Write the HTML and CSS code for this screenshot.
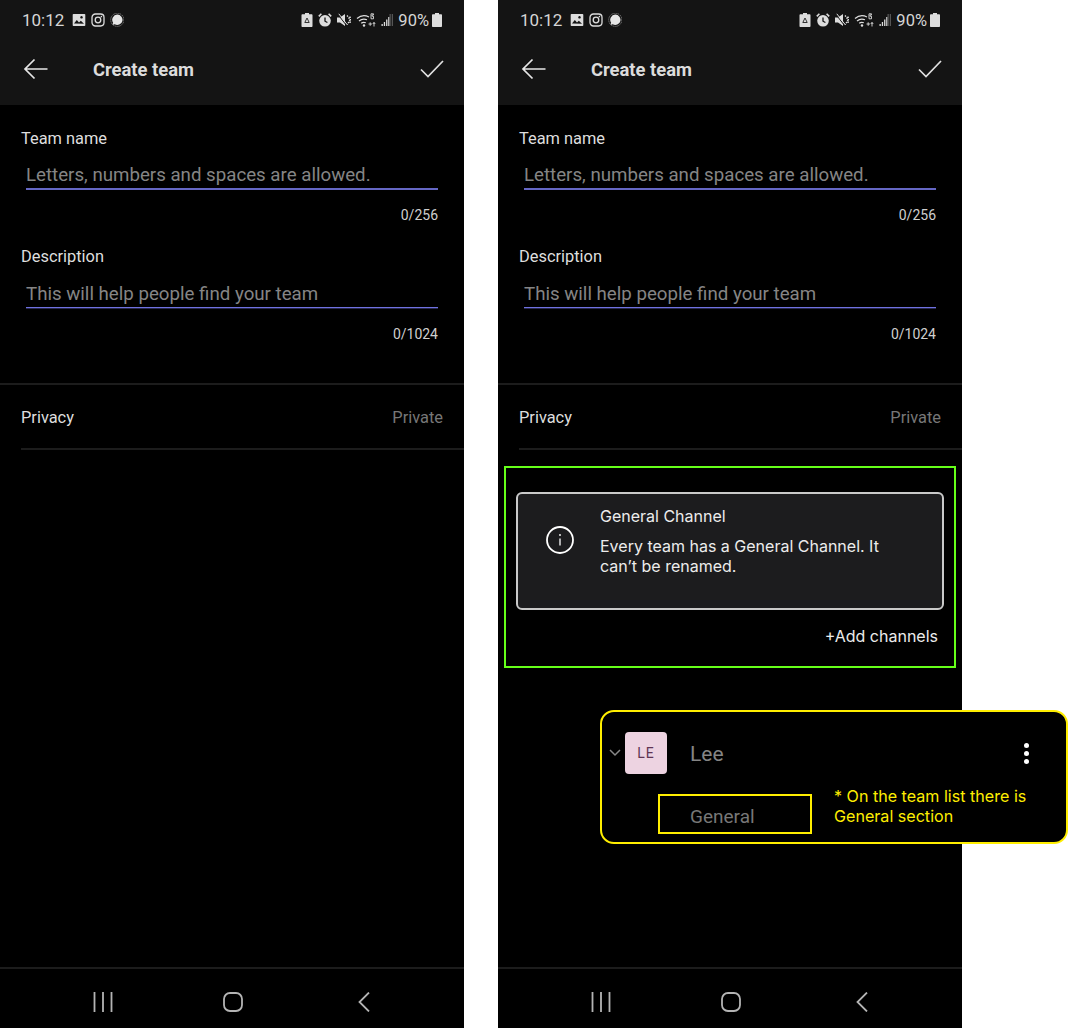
FILE: index.html
```html
<!DOCTYPE html>
<html>
<head>
<meta charset="utf-8" />
<title>Create team</title>
<link rel="stylesheet" href="styles.css">
</head>
<body>
<svg class="sprites" xmlns="http://www.w3.org/2000/svg">
	<symbol id="i-picture" viewBox="0 0 14 14"><path fill="#ddd" fill-rule="evenodd" d="M1.5 1h11a.8.8 0 0 1 .8.8v10.4a.8.8 0 0 1-.8.8h-11a.8.8 0 0 1-.8-.8V1.800a.8.8 0 0 1 .8-.8zM2 10.500l2.800-3.500 2.200 2.400 1.800-1.600 3.200 3V10.800zM9.500 3a1.300 1.300 0 1 0 .01 0z"/></symbol>
	<symbol id="i-insta" viewBox="0 0 14 14"><g fill="none" stroke="#ddd" stroke-width="1.300"><rect x="1" y="1" width="12" height="12" rx="3.400"/><circle cx="7" cy="7" r="2.800"/></g><circle cx="10.400" cy="3.600" r=".8" fill="#ddd"/></symbol>
	<symbol id="i-chat" viewBox="0 0 14 14"><circle cx="7.300" cy="6.800" r="6.600" fill="none" stroke="#999" stroke-width="1" stroke-dasharray="1 1"/><path fill="#e6e6e6" d="M7.300 1.600a5.200 5.200 0 1 1-2.600 9.700L2.400 12l.7-2.300a5.200 5.200 0 0 1 4.200-8.100z"/></symbol>
	<symbol id="i-saver" viewBox="0 0 12 14"><path fill="#ddd" d="M4 0h4v1.300h2.500c.6 0 1 .4 1 1V13c0 .6-.4 1-1 1h-9c-.6 0-1-.4-1-1V2.300c0-.6.4-1 1-1H4z"/><path d="M6 5L3.800 9.500h4.400z" fill="none" stroke="#333" stroke-width="1"/></symbol>
	<symbol id="i-alarm" viewBox="0 0 14 14"><circle cx="7" cy="7.800" r="5.800" fill="#ddd"/><path d="M7 4.400v3.800l2.400 1.300" fill="none" stroke="#141414" stroke-width="1.300"/><path d="M.8 3.400L3.400.8M13.200 3.400L10.600.8" fill="none" stroke="#ddd" stroke-width="1.600"/></symbol>
	<symbol id="i-mute" viewBox="0 0 14 14"><path fill="#ddd" d="M0 4.500h3L8 1v12L3 9.500H0z"/><path d="M1 1.500l8.500 11" fill="none" stroke="#141414" stroke-width="1"/><path d="M1.800 .8l8.500 11" fill="none" stroke="#ddd" stroke-width="1"/><path d="M10 2.500l2 2.500 .8 2-.8 2-2 2.500M13 3.500l.5 3.500-.5 3.500" fill="none" stroke="#ddd" stroke-width="1.400" stroke-dasharray="1.500 1"/></symbol>
	<symbol id="i-wifi" viewBox="0 0 20 14"><path d="M1 5.500a11 11 0 0 1 12-1.500M3 8a8 8 0 0 1 8-1.200M5.200 10.300a4.500 4.500 0 0 1 4.600-.5" fill="none" stroke="#ddd" stroke-width="1.200"/><circle cx="8" cy="12.500" r="1.200" fill="#ddd"/><path d="M15 .8h2.500v1.100h-1.500v1.300h1.500v2.600h-2.500zM12.500 11h3.500M14.200 9.300v3.500M18 13.500v-4M16.800 11l1.200-1.600 1.200 1.600" fill="none" stroke="#ddd" stroke-width=".9"/></symbol>
	<symbol id="i-signal" viewBox="0 0 12 14"><path fill="#555" d="M8.500 1h1.300v12H8.500zM10.700 1H12v12h-1.300z"/><path fill="#ddd" d="M.5 11h1.300v2H.5zM2.800 9h1.300v4H2.800zM5.100 6.500h1.300V13H5.100zM7.200 4h1.100v9H7.200z"/></symbol>
	<symbol id="i-battery" viewBox="0 0 10 14"><path fill="#ddd" d="M3 0h4v1.200h2c.6 0 1 .4 1 1V13c0 .6-.4 1-1 1H1c-.6 0-1-.4-1-1V2.200c0-.6.4-1 1-1h2z"/></symbol>
	<symbol id="i-back" viewBox="0 0 26 22"><path d="M24.500 11H2M11.500 1.500L2 11l9.500 9.500" fill="none" stroke="#e6e6e6" stroke-width="1.700"/></symbol>
	<symbol id="i-check" viewBox="0 0 24 18"><path d="M1 9.500l7 7L23 1" fill="none" stroke="#e0e0e0" stroke-width="1.700"/></symbol>
	<symbol id="i-recents" viewBox="0 0 20 20"><path d="M1.500 0v20M10 0v20M18.500 0v20" fill="none" stroke="#b4b4b4" stroke-width="1.800"/></symbol>
	<symbol id="i-home" viewBox="0 0 20 20"><rect x="1" y="1" width="18" height="18" rx="6" fill="none" stroke="#b4b4b4" stroke-width="1.800"/></symbol>
	<symbol id="i-prev" viewBox="0 0 12 20"><path d="M11 .5L1.500 10 11 19.500" fill="none" stroke="#b4b4b4" stroke-width="1.800"/></symbol>
</svg>

<div class="phone">
	<header class="top">
		<div class="status">
			<span class="time">10:12</span>
			<svg class="ic-14"><use href="#i-picture"/></svg>
			<svg class="ic-14"><use href="#i-insta"/></svg>
			<svg class="ic-14"><use href="#i-chat"/></svg>
			<div class="status-right">
				<svg class="ic-saver"><use href="#i-saver"/></svg>
				<svg class="ic-14"><use href="#i-alarm"/></svg>
				<svg class="ic-14"><use href="#i-mute"/></svg>
				<svg class="ic-wifi"><use href="#i-wifi"/></svg>
				<svg class="ic-saver"><use href="#i-signal"/></svg>
				<span class="pct">90%</span>
				<svg class="ic-batt"><use href="#i-battery"/></svg>
			</div>
		</div>
		<div class="appbar">
			<svg class="ic-back"><use href="#i-back"/></svg>
			<span class="title">Create team</span>
			<svg class="ic-check"><use href="#i-check"/></svg>
		</div>
	</header>
	<main class="content">
		<section class="form">
			<div class="label">Team name</div>
			<div class="field thick">Letters, numbers and spaces are allowed.</div>
			<div class="count">0/256</div>
			<div class="label second">Description</div>
			<div class="field">This will help people find your team</div>
			<div class="count">0/1024</div>
		</section>
		<div class="privacy"><span>Privacy</span><span class="muted">Private</span></div>
	</main>
	<nav class="navbar">
		<svg class="ic-nav"><use href="#i-recents"/></svg>
		<svg class="ic-nav ic-home"><use href="#i-home"/></svg>
		<svg class="ic-prev"><use href="#i-prev"/></svg>
	</nav>
</div>

<div class="phone">
	<header class="top">
		<div class="status">
			<span class="time">10:12</span>
			<svg class="ic-14"><use href="#i-picture"/></svg>
			<svg class="ic-14"><use href="#i-insta"/></svg>
			<svg class="ic-14"><use href="#i-chat"/></svg>
			<div class="status-right">
				<svg class="ic-saver"><use href="#i-saver"/></svg>
				<svg class="ic-14"><use href="#i-alarm"/></svg>
				<svg class="ic-14"><use href="#i-mute"/></svg>
				<svg class="ic-wifi"><use href="#i-wifi"/></svg>
				<svg class="ic-saver"><use href="#i-signal"/></svg>
				<span class="pct">90%</span>
				<svg class="ic-batt"><use href="#i-battery"/></svg>
			</div>
		</div>
		<div class="appbar">
			<svg class="ic-back"><use href="#i-back"/></svg>
			<span class="title">Create team</span>
			<svg class="ic-check"><use href="#i-check"/></svg>
		</div>
	</header>
	<main class="content">
		<section class="form">
			<div class="label">Team name</div>
			<div class="field thick">Letters, numbers and spaces are allowed.</div>
			<div class="count">0/256</div>
			<div class="label second">Description</div>
			<div class="field">This will help people find your team</div>
			<div class="count">0/1024</div>
		</section>
		<div class="privacy"><span>Privacy</span><span class="muted">Private</span></div>

		<section class="green-box">
			<div class="info-card">
				<svg class="ic-info" viewBox="0 0 28 28">
					<circle cx="14" cy="14" r="13" fill="none" stroke="#fff" stroke-width="1.800"/>
					<path d="M14 12.500v7" stroke="#fff" stroke-width="1.300"/>
					<circle cx="14" cy="9" r=".9" fill="#fff"/>
				</svg>
				<div class="info-text">
					<div class="info-title">General Channel</div>
					<div>Every team has a General Channel. It can’t be renamed.</div>
				</div>
			</div>
			<div class="add-link">+Add channels</div>
		</section>

		<section class="callout">
			<div class="team-row">
				<svg class="ic-chev" viewBox="0 0 12 8"><path d="M1 1l5 5 5-5" fill="none" stroke="#888" stroke-width="1.500"/></svg>
				<div class="avatar">LE</div>
				<span class="team-name">Lee</span>
				<div class="dots"><i></i><i></i><i></i></div>
			</div>
			<div class="channel-row">
				<div class="channel-box">General</div>
				<div class="note">* On the team list there is General section</div>
			</div>
		</section>
	</main>
	<nav class="navbar">
		<svg class="ic-nav"><use href="#i-recents"/></svg>
		<svg class="ic-nav ic-home"><use href="#i-home"/></svg>
		<svg class="ic-prev"><use href="#i-prev"/></svg>
	</nav>
</div>
</body>
</html>
```

FILE: styles.css
```css
html, body {margin:0;padding:0;background:#fff;}
body {display:flex;gap:34px;width:1068px;height:1028px;overflow:hidden;font-family:Roboto, sans-serif;}
.sprites {display:none;}

.phone {width:464px;height:1028px;background:#000;display:flex;flex-direction:column;flex:none;color:#ddd;}

/* top bars */
.top {height:105px;background:#141414;flex:none;}
.status {height:40px;display:flex;align-items:center;gap:5px;padding:0 22px;}
.time {font-size:17px;color:#d6d6d6;margin-right:3px;}
.status-right {margin-left:auto;display:flex;align-items:center;gap:5px;}
.pct {font-size:16.500px;color:#d6d6d6;}
.ic-14 {width:14px;height:14px;}
.ic-saver {width:12px;height:14px;}
.ic-wifi {width:20px;height:14px;}
.ic-batt {width:10px;height:14px;margin-left:-2px;}
.appbar {display:flex;align-items:center;height:58px;padding:0 20px 0 23px;}
.ic-back {width:26px;height:22px;}
.ic-check {width:24px;height:18px;margin-left:auto;}
.title {font-size:18.400px;font-weight:700;color:#dcdcdc;margin-left:44px;}

/* form */
.content {flex:1;}
.form {padding:24px 26px 0 21px;height:280px;box-sizing:border-box;border-bottom:2px solid #1c1c1c;}
.label {font-size:16.400px;line-height:20px;color:#dedede;}
.label.second {margin-top:24px;}
.field {margin:15px 0 0 5px;padding-bottom:1px;font-size:18.700px;line-height:24px;color:#858585;border-bottom:1px solid #6f71e0;box-shadow:0 1px 0 rgba(98,100,196,.4);}
.field.thick {margin-top:14px;border-bottom:2px solid #6567c4;box-shadow:none;}
.count {text-align:right;font-size:14px;line-height:16px;margin-top:18px;color:#cfcfcf;}
.field.thick + .count {margin-top:17px;}

.privacy {display:flex;justify-content:space-between;align-items:center;height:61px;padding:2px 21px 0 0;margin-left:21px;font-size:16.400px;color:#dedede;border-bottom:2px solid #1c1c1c;}
.muted {color:#777;}

/* green note */
.green-box {margin:16px 6px 0;height:202px;box-sizing:border-box;border:2px solid #66ff19;padding:24px 10px 0;font-family:Inter, sans-serif;font-size:16px;color:#ececec;}
.info-card {display:flex;height:118px;box-sizing:border-box;border:2px solid #c9c9c9;border-radius:6px;background:#1c1c1e;padding:12px 48px 0 28px;line-height:20px;}
.ic-info {width:28px;height:28px;flex:none;margin-top:20px;}
.info-text {margin-left:26px;}
.info-title {margin-bottom:10px;}
.add-link {text-align:right;margin-top:16px;padding-right:6px;line-height:20px;}

/* yellow note, sticks out of the phone */
.callout {margin:42px 0 0 102px;width:468px;height:134px;box-sizing:border-box;border:2px solid #ffee00;border-radius:14px;background:#000;}
.team-row {display:flex;align-items:center;height:42px;padding:20px 37px 0 7px;}
.ic-chev {width:12px;height:8px;}
.avatar {width:42px;height:42px;margin-left:4px;background:#edd3e1;border-radius:4px;display:flex;align-items:center;justify-content:center;font-size:14px;letter-spacing:1px;color:#5f3553;}
.team-name {font-size:21px;color:#858585;margin-left:23px;padding-top:1px;}
.dots {margin-left:auto;display:flex;flex-direction:column;gap:3px;}
.dots i {display:block;width:5px;height:5px;border-radius:50%;background:#fff;}
.channel-row {display:flex;margin:20px 0 0 56px;}
.channel-box {width:154px;height:40px;box-sizing:border-box;border:2px solid #ffee00;padding:10px 0 0 30px;font-size:19px;line-height:22px;color:#777;}
.note {width:210px;margin:-8px 0 0 22px;font-family:Inter, sans-serif;font-size:16.100px;line-height:20px;color:#ffee00;}

/* bottom nav */
.navbar {height:61px;flex:none;border-top:2px solid #1c1c1c;display:flex;align-items:center;padding:6px 94px 0 93px;justify-content:space-between;box-sizing:border-box;}
.ic-nav {width:20px;height:20px;}
.ic-home {margin-right:5px;}
.ic-prev {width:12px;height:20px;}
```
